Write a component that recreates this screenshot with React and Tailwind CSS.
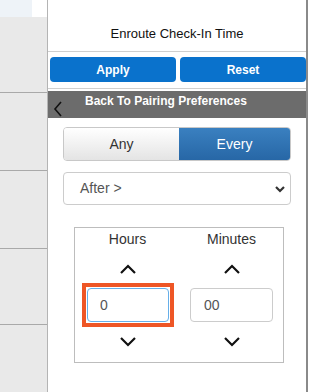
import { useState } from 'react'

function Chevron({ dir = 'up' }) {
  return (
    <svg width="18" height="10" viewBox="0 0 18 10" className="block">
      <path
        d={dir === 'up' ? 'M2 9 L9 2 L16 9' : 'M2 1 L9 8 L16 1'}
        fill="none"
        stroke="#111"
        strokeWidth="2.2"
      />
    </svg>
  )
}

export default function App() {
  const [mode, setMode] = useState('every')
  const [hours, setHours] = useState('0')
  const [minutes, setMinutes] = useState('00')

  return (
    <div
      className="flex h-[392px] w-[311px] overflow-hidden bg-white"
      style={{ fontFamily: '"Liberation Sans", Arial, sans-serif' }}
    >
      {/* Sidebar */}
      <div className="flex w-[48px] shrink-0 flex-col border-r border-[#b4b4b4]">
        <div className="flex h-[17px] bg-white">
          <div className="w-[32px] bg-[#eef3f8]" />
        </div>
        <div className="h-[76px] border-b border-[#a9a9a9] bg-[#e9e9e9]" />
        <div className="h-[78px] border-b border-[#a9a9a9] bg-[#e9e9e9]" />
        <div className="h-[78px] border-b border-[#a9a9a9] bg-[#e9e9e9]" />
        <div className="h-[76px] border-b border-[#a9a9a9] bg-[#e9e9e9]" />
        <div className="flex-1 bg-[#e9e9e9]" />
      </div>

      {/* Panel */}
      <div className="flex w-[260px] shrink-0 flex-col border-r-2 border-[#8a8a8a]">
        <div className="flex h-[52px] items-end justify-center border-b border-[#cfcfcf] pb-[9px] text-[13px] leading-[16px] text-[#111]">
          Enroute Check-In Time
        </div>

        <div className="flex gap-[4px] pl-[2px] pt-[5px]">
          <button className="h-[25px] flex-1 rounded-[4px] bg-[#0a72cc] text-[12px] font-bold text-white">
            Apply
          </button>
          <button className="h-[25px] flex-1 rounded-[4px] bg-[#0a72cc] text-[12px] font-bold text-white">
            Reset
          </button>
        </div>

        <div className="mt-[6px] border-t border-[#d0d0d0] pt-[2px]">
          <div className="relative flex h-[27px] bg-[#6c6c6c]">
            <svg width="10" height="16" viewBox="0 0 10 16" className="absolute left-[5px] top-[10px]">
              <path d="M8 1 L2 8 L8 15" fill="none" stroke="#111" strokeWidth="1.6" />
            </svg>
            <span className="pl-[37px] pt-[3px] text-[12px] font-bold leading-[14px] text-white">
              Back To Pairing Preferences
            </span>
          </div>
        </div>

        <div className="px-[15px] pt-[9px]">
          <div className="flex h-[34px] overflow-hidden rounded-[4px] border border-[#c8c8c8] text-[14px]">
            <button
              onClick={() => setMode('any')}
              className={
                mode === 'any'
                  ? 'w-[115px] bg-gradient-to-b from-[#3a80c0] to-[#2767a6] text-white'
                  : 'w-[115px] bg-gradient-to-b from-white to-[#e4e4e4] text-[#333]'
              }
            >
              Any
            </button>
            <button
              onClick={() => setMode('every')}
              className={
                mode === 'every'
                  ? 'flex-1 bg-gradient-to-b from-[#3a80c0] to-[#2767a6] text-white'
                  : 'flex-1 bg-gradient-to-b from-white to-[#e4e4e4] text-[#333]'
              }
            >
              Every
            </button>
          </div>

          <div className="relative mt-[11px] flex h-[33px] items-center rounded-[4px] border border-[#cccccc] pl-[16px] text-[14px] text-[#555]">
            After &gt;
            <svg width="10" height="7" viewBox="0 0 10 7" className="absolute right-[5px] top-[13px]">
              <path d="M1 1 L5 5 L9 1" fill="none" stroke="#333" strokeWidth="2.2" />
            </svg>
          </div>
        </div>

        <div className="ml-[26px] mt-[22px] flex h-[136px] w-[210px] border border-[#bdbdbd]">
          <div className="flex w-[105px] flex-col items-center">
            <div className="pt-[3px] text-[14px] leading-[16px] text-[#333]">Hours</div>
            <div className="mt-[17px]">
              <Chevron dir="up" />
            </div>
            <div className="mt-[14px] ml-[1px] outline outline-[4px] outline-offset-[1px] outline-[#ee5626]">
              <input
                value={hours}
                onChange={(e) => setHours(e.target.value)}
                className="block h-[34px] w-[82px] rounded-[4px] border border-[#66afe9] pl-[12px] text-[14px] text-[#555] outline-none"
              />
            </div>
            <div className="mt-[15px]">
              <Chevron dir="down" />
            </div>
          </div>
          <div className="flex flex-1 flex-col items-center">
            <div className="pt-[3px] text-[14px] leading-[16px] text-[#333]">Minutes</div>
            <div className="mt-[17px]">
              <Chevron dir="up" />
            </div>
            <div className="mt-[14px]">
              <input
                value={minutes}
                onChange={(e) => setMinutes(e.target.value)}
                className="block h-[34px] w-[83px] rounded-[4px] border border-[#cccccc] pl-[13px] text-[14px] text-[#555] outline-none"
              />
            </div>
            <div className="mt-[15px]">
              <Chevron dir="down" />
            </div>
          </div>
        </div>
      </div>

      <div className="flex-1 bg-white" />
    </div>
  )
}
